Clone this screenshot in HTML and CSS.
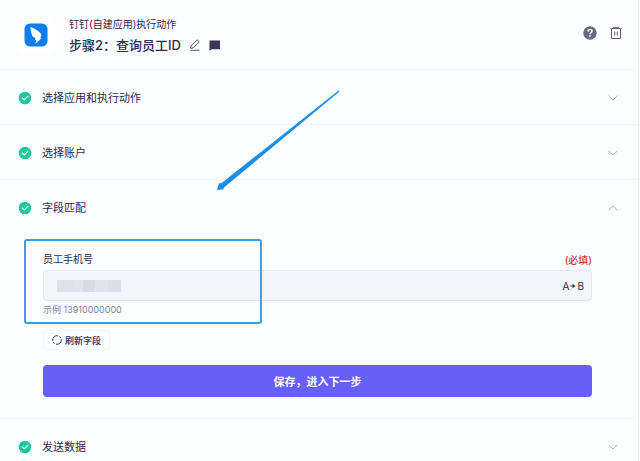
FILE: index.html
```
<!DOCTYPE html>
<html lang="zh-CN">
<head>
  <meta charset="UTF-8">
  <meta name="viewport" content="width=device-width, initial-scale=1.0">
  <title>步骤2：查询员工ID</title>
  <link rel="stylesheet" href="styles.css">
</head>
<body>
  <!-- 公用图标 -->
  <svg class="sprite" aria-hidden="true">
    <symbol id="icon-check" viewBox="0 0 14 14">
      <circle cx="7" cy="7" r="6.3" fill="#1fc6a0"></circle>
      <path d="M4.3 7.1l1.9 1.8 3.6-3.5" fill="none" stroke="#fff" stroke-width="1.3" stroke-linecap="round" stroke-linejoin="round"></path>
    </symbol>
    <symbol id="icon-down" viewBox="0 0 12 12">
      <path d="M1.500 3.800L6 8L10.500 3.800" fill="none" stroke="#b4b2bd" stroke-width="1"></path>
    </symbol>
  </svg>

  <main class="step">
    <header class="step-header">
      <span class="app-logo">
        <svg viewBox="0 0 24 24" width="24" height="24" aria-hidden="true">
          <rect x="0.500" y="0.500" width="23" height="23" rx="5.500" fill="#0d7df2"></rect>
          <path d="M6.500 3.800C9.800 5.600 13.200 7 15.800 9.400C17.200 10.700 17.600 12.200 17 13.700L16.200 15.300H17.400L11.400 21L12.200 17H11L11.400 15C9.200 14.200 8 12.800 7.700 11.200C7.100 8.800 6.400 6.400 6.500 3.800Z" fill="#fff"></path>
        </svg>
      </span>
      <div class="step-heading">
        <p class="step-app">钉钉(自建应用)执行动作</p>
        <div class="step-title-row">
          <h1 class="step-title">步骤2：查询员工ID</h1>
          <button type="button" class="icon-btn" aria-label="编辑名称">
            <svg viewBox="0 0 12 12" width="12" height="12" fill="none" stroke="#55506f" stroke-width="1" stroke-linejoin="round">
              <path d="M1.500 9.300L2.100 7L7.600 1.400Q8.300 0.800 9 1.400L9.700 2.100Q10.300 2.800 9.700 3.500L4.100 8.900Z"></path>
              <path d="M1.500 11.300H10.500"></path>
            </svg>
          </button>
          <button type="button" class="icon-btn" aria-label="备注">
            <svg viewBox="0 0 12 12" width="12" height="12">
              <path d="M0.500 1.500H11V10.300H2.800L0.500 11.800Z" fill="#3d3659"></path>
            </svg>
          </button>
        </div>
      </div>
      <div class="step-actions">
        <button type="button" class="icon-btn" aria-label="帮助">
          <svg viewBox="0 0 14 14" width="14" height="14">
            <circle cx="7" cy="7" r="6.700" fill="#6b6782"></circle>
            <path d="M5 5.500Q5 3.600 7 3.600Q9 3.600 9 5.300Q9 6.400 7.900 6.900Q7 7.400 7 8.200" fill="none" stroke="#fff" stroke-width="1.500"></path>
            <rect x="6.200" y="9.200" width="1.600" height="1.600" fill="#fff"></rect>
          </svg>
        </button>
        <button type="button" class="icon-btn" aria-label="删除">
          <svg viewBox="0 0 12 14" width="12" height="14" fill="none" stroke="#5f5a78" stroke-width="1">
            <path d="M0.500 2.500H11.500M3.500 2V1.300H8.500V2M1.500 2.500V12.500H10.500V2.500M4.700 5.500V9.500M7.300 5.500V9.500"></path>
          </svg>
        </button>
      </div>
    </header>

    <section class="panel">
      <button type="button" class="panel-toggle" aria-expanded="false">
        <svg class="check" aria-hidden="true"><use href="#icon-check"></use></svg>
        <span class="panel-title">选择应用和执行动作</span>
        <svg class="chevron" aria-hidden="true"><use href="#icon-down"></use></svg>
      </button>
    </section>

    <section class="panel">
      <button type="button" class="panel-toggle" aria-expanded="false">
        <svg class="check" aria-hidden="true"><use href="#icon-check"></use></svg>
        <span class="panel-title">选择账户</span>
        <svg class="chevron" aria-hidden="true"><use href="#icon-down"></use></svg>
      </button>
    </section>

    <section class="panel">
      <button type="button" class="panel-toggle" aria-expanded="true">
        <svg class="check" aria-hidden="true"><use href="#icon-check"></use></svg>
        <span class="panel-title">字段匹配</span>
        <svg class="chevron chevron-up" aria-hidden="true"><use href="#icon-down"></use></svg>
      </button>
      <form class="panel-body">
        <div class="field">
          <div class="field-head">
            <label for="phone" class="field-label">员工手机号</label>
            <span class="field-required">(必填)</span>
          </div>
          <div class="field-box">
            <span class="masked" aria-hidden="true"></span>
            <input type="text" id="phone" class="field-input" aria-describedby="phone-hint">
            <button type="button" class="map-btn" aria-label="A 转 B">
              A
              <svg viewBox="0 0 6 6" width="6" height="6" aria-hidden="true">
                <path d="M0.500 3H3" stroke="#3d3659" stroke-width="1"></path>
                <path d="M2.500 0.800L5.500 3L2.500 5.200Z" fill="#3d3659"></path>
              </svg>
              B
            </button>
          </div>
          <p id="phone-hint" class="field-hint">示例 13910000000</p>
          <div class="highlight"></div>
        </div>
        <button type="button" class="refresh-btn">
          <svg viewBox="0 0 10 10" width="10" height="10" fill="none" stroke="#3d3659" stroke-width="1" aria-hidden="true">
            <path d="M0.800 6A4.300 4.300 0 0 1 6 0.800M9.200 4A4.300 4.300 0 0 1 4 9.200"></path>
            <path d="M7.300 1.400A4.300 4.300 0 0 1 8.800 3M2.700 8.600A4.300 4.300 0 0 1 1.200 7"></path>
          </svg>
          刷新字段
        </button>
        <button type="submit" class="save-btn">保存，进入下一步</button>
      </form>
    </section>

    <section class="panel">
      <button type="button" class="panel-toggle" aria-expanded="false">
        <svg class="check" aria-hidden="true"><use href="#icon-check"></use></svg>
        <span class="panel-title">发送数据</span>
        <svg class="chevron" aria-hidden="true"><use href="#icon-down"></use></svg>
      </button>
    </section>

    <!-- 指向字段的箭头 -->
    <svg class="arrow" viewBox="0 0 124 102" aria-hidden="true">
      <path d="M122.500 0.500L123.500 1.500L8 97.500L7.500 99.300L1 100L3 93L5 93.500Z" fill="#1b8fe6"></path>
    </svg>
  </main>
</body>
</html>
```

FILE: styles.css
```
:root {
  --background: #fcfdff;
  --foreground: #2f2850;
  --muted-foreground: #85829a;
  --primary: #665ff8;
  --border: #f4f5f9;
  --input: #f4f5fb;
  --input-border: #e4e5f1;
  --required: #d9383a;
  --annotation: #3d9ee0;
  --radius: 4px;
}

* {
  margin: 0;
  padding: 0;
  box-sizing: border-box;
}

body {
  font-family: Inter, "Noto Sans CJK SC", sans-serif;
  background-color: var(--background);
  color: var(--foreground);
  overflow: hidden;
}

button {
  font-family: inherit;
  color: inherit;
  border: none;
  background: transparent;
  cursor: pointer;
}

svg {
  display: block;
  flex: none;
}

.sprite {
  position: absolute;
  width: 0;
  height: 0;
}

.step {
  position: relative;
  min-height: 100vh;
  margin-right: 1px;
  border-right: 1px solid #eff0f5;
}

.step-header {
  display: flex;
  align-items: center;
  height: 70px;
  padding: 0 16px 0 18px;
  border-bottom: 1px solid var(--border);
}

.app-logo {
  display: flex;
  align-items: center;
  justify-content: center;
  width: 36px;
  height: 36px;
  margin-right: 15px;
  border-radius: var(--radius);
  background-color: #fff;
}

.step-heading {
  flex: 1;
  padding-top: 2px;
}

.step-app {
  font-size: 10px;
  line-height: 16px;
}

.step-title-row {
  display: flex;
  align-items: center;
  gap: 8px;
  margin-top: 3px;
}

.step-title {
  font-size: 13px;
  font-weight: 500;
  line-height: 20px;
}

.step-actions {
  display: flex;
  align-items: center;
  gap: 14px;
  padding-bottom: 4px;
}

.step-actions .icon-btn:first-child {
  margin-right: -1px;
}

.panel {
  border-bottom: 1px solid var(--border);
}

.panel-toggle {
  display: flex;
  align-items: center;
  width: 100%;
  height: 54px;
  padding: 2px 19px 0 18px;
  text-align: left;
}

.check {
  width: 14px;
  height: 14px;
  margin-right: 10px;
}

.panel-title {
  flex: 1;
  font-size: 11px;
  line-height: 16px;
}

.chevron {
  width: 12px;
  height: 12px;
}

.chevron-up {
  transform: rotate(180deg);
}

.panel-body {
  padding: 16px 46px 21px 43px;
}

.field {
  position: relative;
}

.field-head {
  display: flex;
  align-items: center;
  justify-content: space-between;
  height: 18px;
  margin-bottom: 2px;
}

.field-label {
  font-size: 10px;
  line-height: 16px;
}

.field-required {
  color: var(--required);
  font-size: 10px;
  font-weight: 500;
}

.field-box {
  display: flex;
  align-items: center;
  height: 31px;
  padding: 0 7px 0 13px;
  background-color: var(--input);
  border: 1px solid var(--input-border);
  border-radius: var(--radius);
}

.masked {
  width: 64px;
  height: 12px;
  background: linear-gradient(90deg, #dfe0ea 0 25%, #e2e3ec 25% 40%, #d9dae5 40% 60%, #e1e2ec 60% 80%, #dddeea 80%);
}

.field-input {
  flex: 1;
  min-width: 0;
  height: 100%;
  border: none;
  outline: none;
  background: transparent;
  color: var(--foreground);
  font-size: 10px;
}

.map-btn {
  display: flex;
  align-items: center;
  gap: 1px;
  font-size: 10px;
}

.field-hint {
  margin-top: 1px;
  color: var(--muted-foreground);
  font-size: 9px;
  line-height: 16px;
}

/* 标注框 */
.highlight {
  position: absolute;
  top: -11px;
  left: -19px;
  width: 238px;
  height: 85px;
  border: 2px solid var(--annotation);
  border-radius: 3px;
  pointer-events: none;
}

.refresh-btn {
  display: flex;
  align-items: center;
  gap: 3px;
  height: 20px;
  margin-top: 12px;
  padding: 0 8px;
  border: 1px solid #f5f6fa;
  border-radius: var(--radius);
  font-size: 9px;
  font-weight: 500;
}

.save-btn {
  display: block;
  width: 100%;
  height: 32px;
  margin-top: 15px;
  border-radius: var(--radius);
  background-color: var(--primary);
  color: #fff;
  font-size: 11px;
  font-weight: 700;
}

.save-btn:hover {
  opacity: 0.9;
}

.arrow {
  position: absolute;
  top: 90px;
  left: 216px;
  width: 124px;
  height: 102px;
  pointer-events: none;
}
```
